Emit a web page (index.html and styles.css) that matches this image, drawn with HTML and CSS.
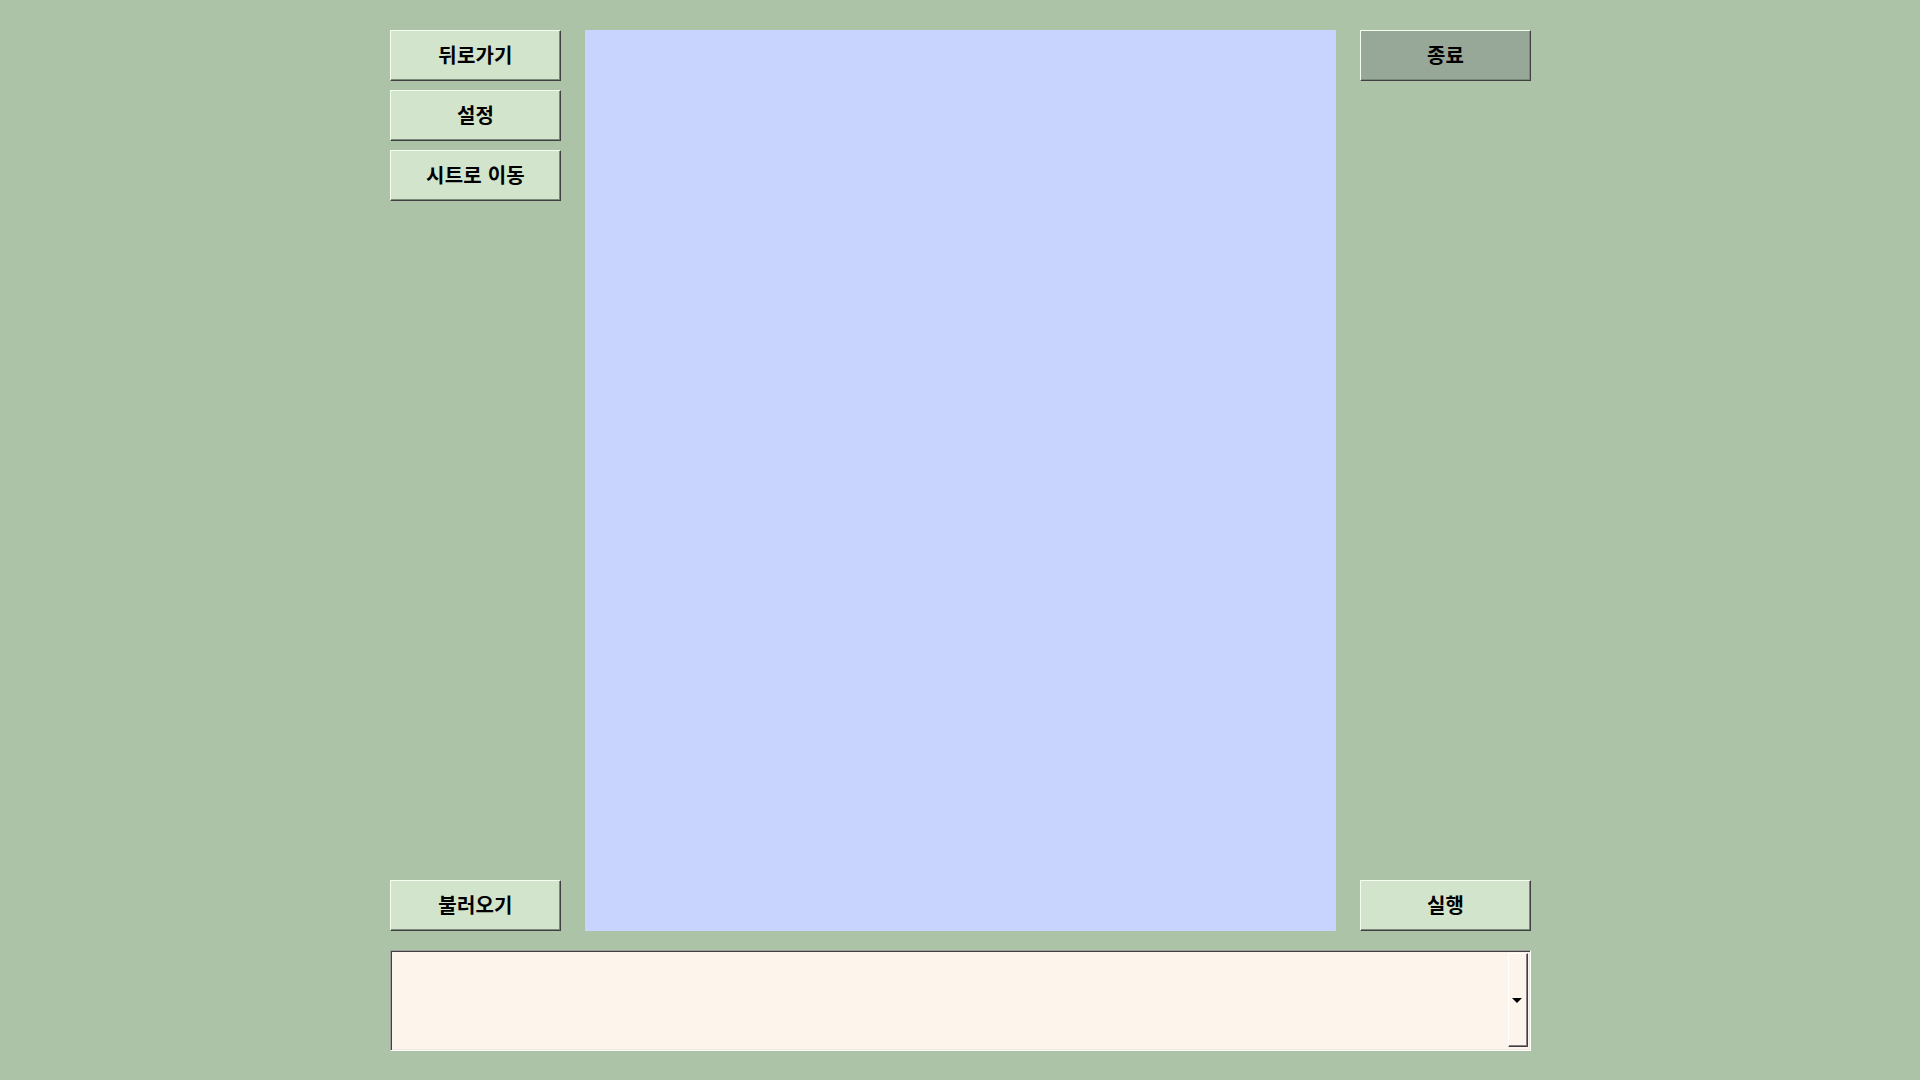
FILE: index.html
```html
<!DOCTYPE html>
<html lang="ko">
<head>
<meta charset="utf-8">
<title>Form</title>
<link rel="stylesheet" href="styles.css">
</head>
<body>
<div class="form">
  <div class="main">
    <div class="side">
      <div class="stack">
        <button class="btn">뒤로가기</button>
        <button class="btn">설정</button>
        <button class="btn">시트로 이동</button>
      </div>
      <button class="btn">불러오기</button>
    </div>
    <div class="panel"></div>
    <div class="side">
      <button class="btn btn-exit">종료</button>
      <button class="btn">실행</button>
    </div>
  </div>
  <div class="combo">
    <div class="combo-btn"><span class="arrow"></span></div>
  </div>
</div>
</body>
</html>
```

FILE: styles.css
```css
html, body {
  margin: 0;
  padding: 0;
  background: #adc3a8;
  width: 1920px;
  height: 1080px;
  overflow: hidden;
}
.form {
  width: 1141px;
  margin: 30px 0 0 390px;
  display: flex;
  flex-direction: column;
  gap: 19px;
}
.main {
  display: flex;
  gap: 24px;
  height: 901px;
}
.side {
  width: 171px;
  display: flex;
  flex-direction: column;
  justify-content: space-between;
}
.stack {
  display: flex;
  flex-direction: column;
  gap: 9px;
}
.btn {
  box-sizing: border-box;
  width: 171px;
  height: 51px;
  margin: 0;
  padding: 0 0 1px 0;
  background: #d2e4cc;
  border-style: solid;
  border-width: 1px 1px 1px 1px;
  border-color: #f4fff0 #404040 #404040 #f4fff0;
  box-shadow: inset -1px -1px 0 #7a8a78;
  font-family: "Noto Sans CJK KR", "Noto Sans", sans-serif;
  font-weight: 700;
  font-size: 20px;
  letter-spacing: 0.2px;
  color: #000;
  line-height: 1;
  display: flex;
  align-items: center;
  justify-content: center;
  cursor: default;
}
.btn-exit {
  background: #98a898;
}
.panel {
  width: 751px;
  background: #c8d3fe;
}
.combo {
  box-sizing: border-box;
  height: 101px;
  background: #fdf4ec;
  border-style: solid;
  border-width: 1px;
  border-color: #a0a0a0 #ffffff #ffffff #a0a0a0;
  box-shadow: inset 1px 1px 0 #404040, inset -1px -1px 0 #f0ece4;
  display: flex;
  justify-content: flex-end;
  padding: 2px 2px 3px 0;
}
.combo-btn {
  box-sizing: border-box;
  width: 20px;
  background: #fdf4ec;
  border-style: solid;
  border-width: 1px;
  border-color: #ffffff #404040 #404040 #ffffff;
  box-shadow: inset -1px -1px 0 #808080;
  display: flex;
  align-items: center;
  justify-content: center;
}
.arrow {
  width: 0;
  height: 0;
  border-left: 5px solid transparent;
  border-right: 5px solid transparent;
  border-top: 5px solid #000;
  margin-right: 2px;
}
```
